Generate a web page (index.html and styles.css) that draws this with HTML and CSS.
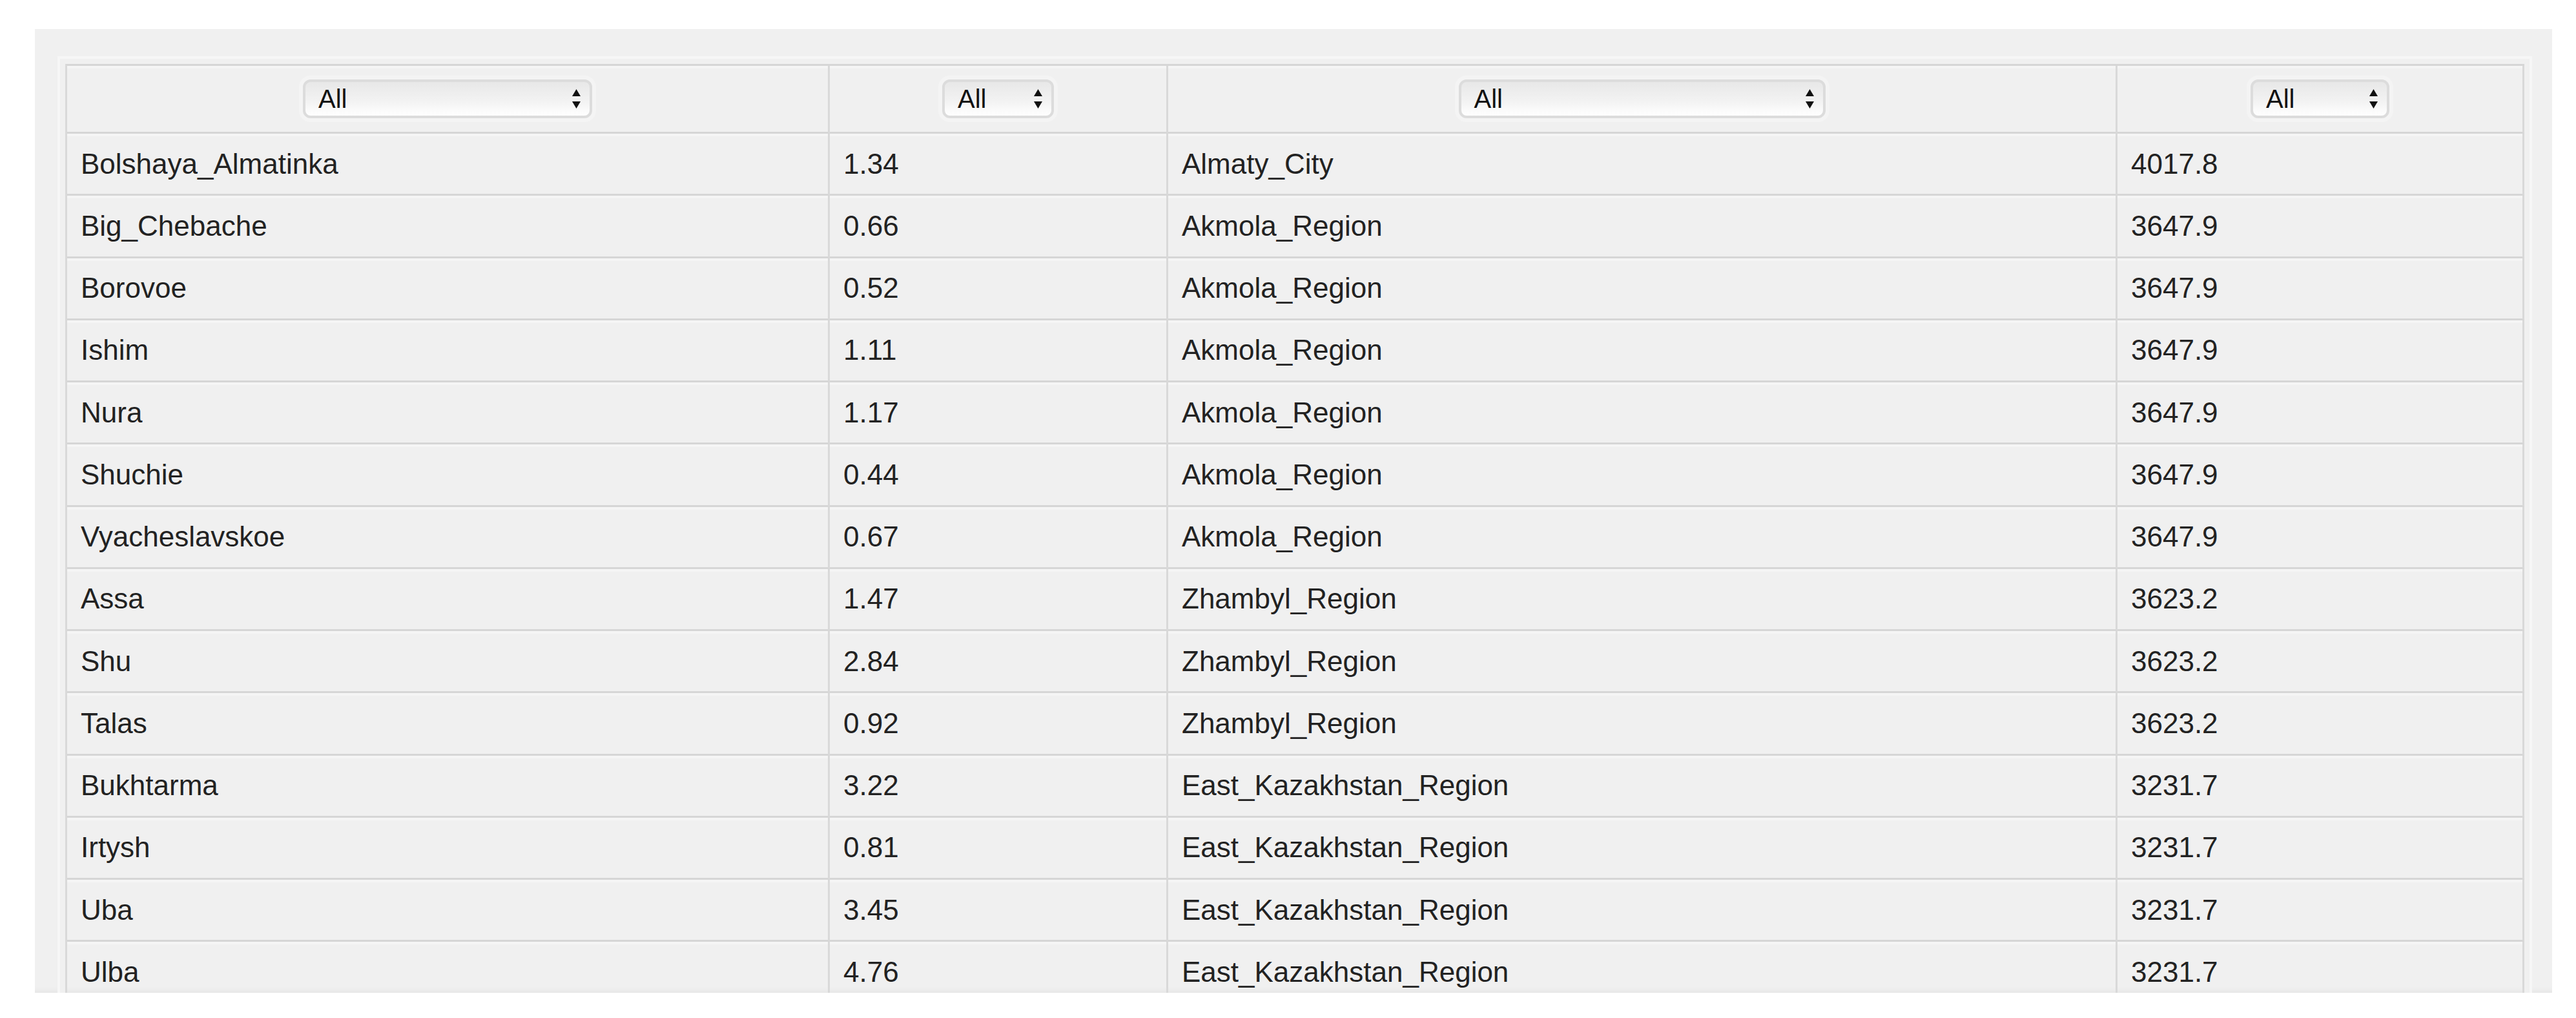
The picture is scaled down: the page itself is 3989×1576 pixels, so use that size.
FILE: index.html
```html
<!DOCTYPE html>
<html lang="en">
<head>
<meta charset="utf-8">
<title>Rivers table</title>
<link rel="stylesheet" href="styles.css">
</head>
<body>
<div class="page">
  <div class="panel">
    <div class="grid" role="table">
      <div class="hcell" role="columnheader"><div class="select w1"><span>All</span><svg class="arrows" viewBox="0 0 17 34" width="17" height="34"><polygon points="8.5,2 15,13 2,13"/><polygon points="2,21 15,21 8.5,32"/></svg></div></div>
      <div class="hcell" role="columnheader"><div class="select w2"><span>All</span><svg class="arrows" viewBox="0 0 17 34" width="17" height="34"><polygon points="8.5,2 15,13 2,13"/><polygon points="2,21 15,21 8.5,32"/></svg></div></div>
      <div class="hcell" role="columnheader"><div class="select w3"><span>All</span><svg class="arrows" viewBox="0 0 17 34" width="17" height="34"><polygon points="8.5,2 15,13 2,13"/><polygon points="2,21 15,21 8.5,32"/></svg></div></div>
      <div class="hcell" role="columnheader"><div class="select w4"><span>All</span><svg class="arrows" viewBox="0 0 17 34" width="17" height="34"><polygon points="8.5,2 15,13 2,13"/><polygon points="2,21 15,21 8.5,32"/></svg></div></div>

      <div class="cell">Bolshaya_Almatinka</div><div class="cell">1.34</div><div class="cell">Almaty_City</div><div class="cell">4017.8</div>
      <div class="cell">Big_Chebache</div><div class="cell">0.66</div><div class="cell">Akmola_Region</div><div class="cell">3647.9</div>
      <div class="cell">Borovoe</div><div class="cell">0.52</div><div class="cell">Akmola_Region</div><div class="cell">3647.9</div>
      <div class="cell">Ishim</div><div class="cell">1.11</div><div class="cell">Akmola_Region</div><div class="cell">3647.9</div>
      <div class="cell">Nura</div><div class="cell">1.17</div><div class="cell">Akmola_Region</div><div class="cell">3647.9</div>
      <div class="cell">Shuchie</div><div class="cell">0.44</div><div class="cell">Akmola_Region</div><div class="cell">3647.9</div>
      <div class="cell">Vyacheslavskoe</div><div class="cell">0.67</div><div class="cell">Akmola_Region</div><div class="cell">3647.9</div>
      <div class="cell">Assa</div><div class="cell">1.47</div><div class="cell">Zhambyl_Region</div><div class="cell">3623.2</div>
      <div class="cell">Shu</div><div class="cell">2.84</div><div class="cell">Zhambyl_Region</div><div class="cell">3623.2</div>
      <div class="cell">Talas</div><div class="cell">0.92</div><div class="cell">Zhambyl_Region</div><div class="cell">3623.2</div>
      <div class="cell">Bukhtarma</div><div class="cell">3.22</div><div class="cell">East_Kazakhstan_Region</div><div class="cell">3231.7</div>
      <div class="cell">Irtysh</div><div class="cell">0.81</div><div class="cell">East_Kazakhstan_Region</div><div class="cell">3231.7</div>
      <div class="cell">Uba</div><div class="cell">3.45</div><div class="cell">East_Kazakhstan_Region</div><div class="cell">3231.7</div>
      <div class="cell">Ulba</div><div class="cell">4.76</div><div class="cell">East_Kazakhstan_Region</div><div class="cell">3231.7</div>
    </div>
  </div>
</div>
</body>
</html>
```

FILE: styles.css
```css
html, body {
  margin: 0;
  padding: 0;
  background: #ffffff;
}

.page {
  padding: 45px 0 0 54px;
  font-family: "Liberation Sans", Arial, sans-serif;
}

.panel {
  box-sizing: border-box;
  width: 3898px;
  height: 1492px;
  padding: 54px 0 0 47px;
  overflow: hidden;
  background: #f0f0f0;
  box-shadow: inset 0 -10px 10px -8px rgba(0, 0, 0, 0.06);
}

.grid {
  display: grid;
  grid-template-columns: 1181px 524px 1470px 630px;
  grid-template-rows: 105px;
  grid-auto-rows: 96.25px;
  width: max-content;
  border-top: 3px solid #d6d6d6;
  border-left: 3px solid #d9d9d9;
  box-shadow: 0 0 0 8px #f0f0f0, 0 0 0 12px #f6f6f6;
}

.hcell,
.cell {
  box-sizing: border-box;
  border-right: 3px solid #d9d9d9;
  border-bottom: 3px solid #d6d6d6;
  box-shadow: inset 0 4px 0 #f5f5f5;
  display: flex;
  align-items: center;
  min-width: 0;
}

.hcell {
  justify-content: center;
}

.cell {
  padding-left: 21px;
  font-size: 44px;
  color: #222222;
  white-space: nowrap;
}

.select {
  box-sizing: border-box;
  height: 60px;
  display: flex;
  align-items: center;
  justify-content: space-between;
  padding: 0 12px 0 20px;
  border: 4px solid #dcdcdc;
  border-radius: 12px;
  background: linear-gradient(#e8e8e8 0%, #f2f2f2 55%, #ffffff 100%);
  box-shadow: 0 0 0 6px #f4f4f4;
  font-size: 40px;
  color: #111111;
}

.select span {
  line-height: 1;
}

.arrows {
  display: block;
  fill: #111111;
}

.w1 { width: 448px; }
.w2 { width: 173px; }
.w3 { width: 568px; }
.w4 { width: 215px; }
```
